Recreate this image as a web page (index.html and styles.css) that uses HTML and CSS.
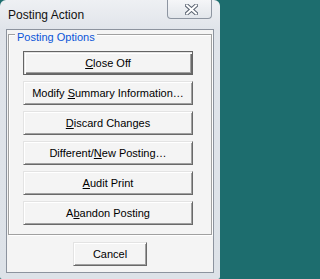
FILE: index.html
```html
<!DOCTYPE html>
<html>
<head>
<meta charset="utf-8">
<link rel="stylesheet" href="styles.css">
</head>
<body>
<div class="window">
  <div class="titlebar">
    <span class="title">Posting Action</span>
    <div class="close">
      <svg width="13" height="11" viewBox="0 0 13 11">
        <path d="M2 1.5 L11 9.5 M11 1.5 L2 9.5" stroke="#5b6472" stroke-width="4" stroke-linecap="square" fill="none"/>
        <path d="M2 1.5 L11 9.5 M11 1.5 L2 9.5" stroke="#ffffff" stroke-width="2" stroke-linecap="square" fill="none"/>
      </svg>
    </div>
  </div>
  <div class="client">
    <div class="group">
      <div class="group-title">Posting Options</div>
      <div class="buttons">
        <button class="btn default"><u>C</u>lose Off</button>
        <button class="btn">Modify <u>S</u>ummary Information…</button>
        <button class="btn"><u>D</u>iscard Changes</button>
        <button class="btn">Different/<u>N</u>ew Posting…</button>
        <button class="btn"><u>A</u>udit Print</button>
        <button class="btn">A<u>b</u>andon Posting</button>
      </div>
    </div>
    <button class="btn cancel">Cancel</button>
  </div>
</div>
</body>
</html>
```

FILE: styles.css
```css
* { box-sizing: border-box; }
html, body { margin: 0; padding: 0; }
body {
  width: 220px;
  height: 279px;
  overflow: hidden;
  background: #1d6d6e;
  font-family: "Liberation Sans", Arial, sans-serif;
}
.window {
  width: 220px;
  height: 279px;
  display: flex;
  flex-direction: column;
  padding: 0 6px 6px 6px;
  background: linear-gradient(#eef0f3, #e0e4ea 30px, #dde2e8);
  border-radius: 6px 6px 2px 2px;
}
.titlebar {
  flex: none;
  height: 29px;
  display: flex;
  align-items: flex-start;
}
.title {
  margin: 8px 0 0 2px;
  font-size: 12px;
  line-height: 14px;
  color: #111;
}
.close {
  margin-left: auto;
  margin-right: 2px;
  width: 45px;
  height: 19px;
  border: 1px solid #8d95a1;
  border-top: none;
  border-radius: 0 0 4px 4px;
  background: linear-gradient(#f5f6f8, #e2e6eb);
  display: flex;
  align-items: center;
  justify-content: center;
  padding-left: 3px;
}
.close svg { display: block; }
.client {
  flex: 1;
  border: 1px solid #8c939e;
  background: #f4f4f4;
  padding: 4px 1px 6px 1px;
  display: flex;
  flex-direction: column;
}
.group {
  height: 201px;
  border: 1px solid #a0a0a0;
  box-shadow: inset 1px 1px 0 #fff, 1px 1px 0 #fff;
  padding: 0 0 0 6px;
}
.group-title {
  display: table;
  margin-top: -5px;
  padding: 0 2px;
  background: #f4f4f4;
  color: #0a55d8;
  font-size: 11px;
  line-height: 14px;
}
.buttons {
  display: flex;
  flex-direction: column;
  gap: 6px;
  margin: 7px 0 0 8px;
}
.btn {
  width: 170px;
  height: 24px;
  padding: 0;
  margin: 0;
  font-family: "Liberation Sans", Arial, sans-serif;
  font-size: 11px;
  color: #000;
  background: #f4f4f4;
  border: 1px solid;
  border-color: #e3e3e3 #696969 #696969 #e3e3e3;
  box-shadow: inset 1px 1px 0 #fff, inset -1px -1px 0 #a0a0a0;
  border-radius: 0;
  appearance: none;
  -webkit-appearance: none;
}
.btn u { text-underline-offset: 1px; }
.btn.default {
  border: 1px solid #646464;
  box-shadow: inset 1px 1px 0 #e3e3e3, inset 2px 2px 0 #fff, inset -1px -1px 0 #696969, inset -2px -2px 0 #a0a0a0;
}
.cancel {
  width: 74px;
  align-self: center;
  margin-top: 7px;
}
```
